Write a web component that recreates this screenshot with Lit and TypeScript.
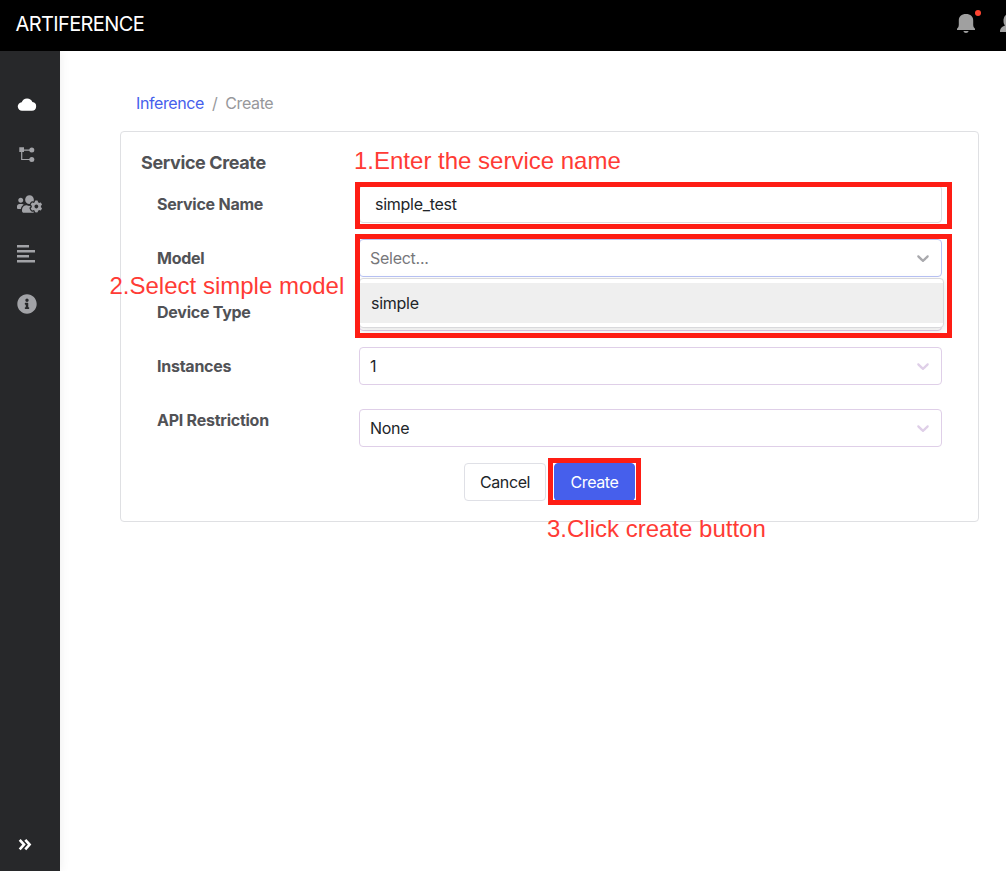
import { LitElement, html, css, svg } from "lit";
import { customElement } from "lit/decorators.js";

const chevron = html`<svg class="chev" viewBox="0 0 20 20"><path d="M4.516 7.548c0.436-0.446 1.043-0.481 1.576 0l3.908 3.747 3.908-3.747c0.533-0.481 1.141-0.446 1.574 0 0.436 0.445 0.408 1.197 0 1.615-0.406 0.418-4.695 4.502-4.695 4.502-0.217 0.223-0.502 0.335-0.787 0.335s-0.57-0.112-0.789-0.335c0 0-4.287-4.084-4.695-4.502s-0.436-1.17 0-1.615z"/></svg>`;

const cloud = svg`<path d="M5.300 16.700A4.250 4.250 0 0 1 4.700 8.200A5.700 5.700 0 0 1 15.400 8.100A4.320 4.320 0 0 1 14.700 16.700Z"/>`;
const flow = svg`<path d="M2.300 3.300h4.700v2.200h7v1.200h-7V8H5.300v6.900h9.500v1.200H4.100V8H2.300z"/><circle cx="14.800" cy="6.100" r="2.500"/><circle cx="14.800" cy="15.500" r="2.500"/>`;
const team = svg`<path d="M610.5 341.3c2.6-14.1 2.6-28.5 0-42.6l25.8-14.9c3-1.7 4.3-5.2 3.3-8.5-6.7-21.6-18.2-41.2-33.2-57.4-2.3-2.5-6-3.1-9-1.4l-25.8 14.9c-10.9-9.3-23.4-16.5-36.9-21.3v-29.8c0-3.4-2.4-6.4-5.7-7.1-22.3-5-45-4.8-66.2 0-3.3.7-5.7 3.7-5.7 7.1v29.8c-13.5 4.8-26 12-36.9 21.3l-25.8-14.9c-2.9-1.7-6.7-1.1-9 1.4-15 16.2-26.5 35.8-33.2 57.4-1 3.3.4 6.8 3.3 8.5l25.8 14.9c-2.6 14.1-2.6 28.5 0 42.6l-25.8 14.9c-3 1.7-4.3 5.2-3.3 8.5 6.7 21.6 18.2 41.1 33.2 57.4 2.3 2.5 6 3.1 9 1.4l25.8-14.9c10.9 9.3 23.4 16.5 36.9 21.3v29.8c0 3.4 2.4 6.4 5.7 7.1 22.3 5 45 4.8 66.2 0 3.3-.7 5.7-3.7 5.7-7.1v-29.8c13.5-4.8 26-12 36.9-21.3l25.8 14.9c2.9 1.7 6.7 1.1 9-1.4 15-16.2 26.5-35.8 33.2-57.4 1-3.3-.4-6.8-3.3-8.5l-25.8-14.9zM496 368.5c-26.8 0-48.5-21.8-48.5-48.5s21.8-48.5 48.5-48.5 48.5 21.8 48.5 48.5-21.7 48.5-48.5 48.5zM96 224c35.3 0 64-28.7 64-64s-28.7-64-64-64-64 28.7-64 64 28.7 64 64 64zm224 32c1.9 0 3.7-.5 5.6-.6 8.3-21.7 20.5-42.1 36.3-59.2 7.4-8 17.9-12.6 28.9-12.6 6.9 0 13.7 1.8 19.6 5.3l7.9 4.6c.8-.5 1.6-.9 2.4-1.4 7-14.6 11.2-30.8 11.2-48 0-61.9-50.1-112-112-112S208 82.1 208 144c0 61.9 50.1 112 112 112zm105.2 194.5c-2.3-1.2-4.6-2.6-6.8-3.9-8.2 4.8-15.3 9.8-27.5 9.8-10.9 0-21.4-4.6-28.9-12.6-18.3-19.8-32.3-43.9-40.2-69.6-10.7-34.5 24.9-49.7 25.8-50.3-.1-2.6-.1-5.2 0-7.8l-7.9-4.6c-3.8-2.2-7-5-9.8-8.1-3.3.2-6.5.6-9.8.6-24.6 0-47.6-6-68.5-16h-8.3C179.6 288 128 339.6 128 403.2V432c0 26.5 21.5 48 48 48h255.4c-3.7-6-6.2-12.8-6.2-20.3v-9.2zM173.1 274.6C161.5 263.1 145.6 256 128 256H64c-35.3 0-64 28.7-64 64v32c0 17.7 14.3 32 32 32h65.9c6.3-47.4 34.9-87.3 75.2-109.4z"/>`;
const lines = svg`<path d="M0 1h12v2.5H0zM0 6h18v2.5H0zM0 11h12v2.5H0zM0 16h18v2.5H0z"/>`;
const info = svg`<path d="M256 8C119.043 8 8 119.083 8 256c0 136.997 111.043 248 248 248s248-111.003 248-248C504 119.083 392.957 8 256 8zm0 110c23.196 0 42 18.804 42 42s-18.804 42-42 42-42-18.804-42-42 18.804-42 42-42zm56 254c0 6.627-5.373 12-12 12h-88c-6.627 0-12-5.373-12-12v-24c0-6.627 5.373-12 12-12h12v-64h-12c-6.627 0-12-5.373-12-12v-24c0-6.627 5.373-12 12-12h64c6.627 0 12 5.373 12 12v100h12c6.627 0 12 5.373 12 12v24z"/>`;

@customElement("app-root")
export class AppRoot extends LitElement {
  static styles = css`
    :host { display: flex; flex-direction: column; height: 871px; width: 1006px; overflow: hidden; background: #fff;
      font: 16px/24px Inter, sans-serif; color: #212529; }
    * { box-sizing: border-box; }
    svg { display: block; }
    header { height: 51px; flex: none; background: #000; color: #fff; display: flex; align-items: center;
      justify-content: space-between; padding: 0 0 4px 15.5px; overflow: hidden; }
    .brand { font-size: 20px; letter-spacing: -.62px; }
    .tools { width: 50px; height: 47px; flex: none; }
    .body { flex: 1; display: flex; min-height: 0; }
    nav { width: 60px; background: #27282a; display: flex; flex-direction: column; padding: 28px 0 14px 17px;
      box-shadow: 0 0 10px rgba(0,0,0,.08); clip-path: inset(0 -12px 0 0); }
    .item { height: 50px; display: flex; align-items: center; fill: #a2a3a7; }
    .active { fill: #fff; }
    .toggle { margin-top: auto; height: 24px; display: flex; align-items: center; }
    main { width: 919px; padding: 40px 0 0 60px; }
    .crumbs { display: flex; gap: 8px; padding-left: 16px; height: 24px; margin-bottom: 16px; color: #97989b; letter-spacing: -.4px; }
    .link { color: #465fec; }
    .card { position: relative; width: 859px; height: 391px; border: 1px solid #dfe0e3; border-radius: 4px; padding: 19px 20px; }
    .title { font-size: 18px; font-weight: 700; color: #515256; line-height: 24px; height: 34px; letter-spacing: -.38px; }
    .form { display: flex; flex-direction: column; gap: 16px; padding: 0 16px; }
    .row { display: grid; grid-template-columns: 202px 583px; align-items: start; }
    .label { font-weight: 700; line-height: 38px; color: #515256; letter-spacing: -.25px; }
    .field { position: relative; height: 38px; border: 1px solid #dfcfe8; border-radius: 4px; display: flex; align-items: center;
      justify-content: space-between; padding: 0 8px 0 10px; letter-spacing: -.27px; fill: #dfcfe8; }
    .plain { border-color: #dcdde0; padding-left: 15px; }
    .focus { border-color: #b9c3f5; color: #77777a; fill: #a9a9ad; z-index: 2; }
    .low { margin-top: 8px; }
    .chev { width: 20px; height: 20px; }
    .menu { position: absolute; left: -1px; top: 38px; width: 585px; height: 50px; border: 1px solid #d9d9dc; border-radius: 4px;
      background: #fff; padding: 4px 0; box-shadow: 0 3px 8px rgba(0,0,0,.1); color: #212529; }
    .option { height: 40px; line-height: 40px; background: #efefef; padding-left: 11px; }
    .buttons { display: flex; gap: 8px; padding-left: 307px; }
    .btn { height: 38px; width: 82px; border: 1px solid #dfe0e6; border-radius: 4px; line-height: 36px; text-align: center; letter-spacing: -.38px; }
    .primary { background: #465fec; color: #fff; border-color: #465fec; width: 81px; }
    .box { position: absolute; border: 5px solid #fe1d14; z-index: 3; }
    .b1 { left: 234px; top: 50px; width: 597px; height: 47px; }
    .b2 { left: 234px; top: 102px; width: 597px; height: 104px; }
    .b3 { left: 427px; top: 326px; width: 93px; height: 47px; }
    .note { position: absolute; font: 24px/28px "Liberation Sans", sans-serif; color: #ff3b35; white-space: nowrap; z-index: 4; }
    .n1 { left: 233px; top: 15px; }
    .n2 { left: -11.500px; top: 140px; }
    .n3 { left: 426px; top: 383px; }
  `;

  render() {
    return html`
      <header>
        <div class="brand">ARTIFERENCE</div>
        <svg class="tools" viewBox="956 0 50 47">
          <path fill="#a0a0a0" d="M957 30v-1.2q1.8-1 1.8-3.8V20.5c0-4 2.7-6.5 7.2-6.5s7.2 2.500 7.200 6.500V25q0 2.800 1.800 3.800V30zM963.300 31h5.400q-.7 2-2.700 2t-2.700-2z"/>
          <circle cx="978" cy="13" r="3" fill="#ff4430"/>
          <path fill="#a0a0a0" d="M1000 32c0-4 2-5.500 5-6.500c-1.500-1.500-1.500-3-1.500-6q.5-4 4-5.500V32z"/>
        </svg>
      </header>
      <div class="body">
        <nav>
          <div class="item active"><svg width="20" height="20">${cloud}</svg></div>
          <div class="item"><svg width="20" height="20">${flow}</svg></div>
          <div class="item"><svg width="25" height="20" viewBox="0 0 640 512">${team}</svg></div>
          <div class="item"><svg width="20" height="20">${lines}</svg></div>
          <div class="item"><svg width="20" height="20" viewBox="0 0 512 512">${info}</svg></div>
          <div class="toggle"><svg width="20" height="20" fill="none" stroke="#fff" stroke-width="2.600"><path d="M2.700 4.800l4.300 4.800l-4.300 4.800M8.300 4.800l4.300 4.800l-4.300 4.800"/></svg></div>
        </nav>
        <main>
          <div class="crumbs"><span class="link">Inference</span><span>/</span><span>Create</span></div>
          <section class="card">
            <div class="title">Service Create</div>
            <div class="form">
              <div class="row"><div class="label">Service Name</div><div class="field plain">simple_test</div></div>
              <div class="row"><div class="label">Model</div>
                <div class="field focus"><span>Select...</span>${chevron}<div class="menu"><div class="option">simple</div></div></div></div>
              <div class="row"><div class="label">Device Type</div><div class="field"></div></div>
              <div class="row"><div class="label">Instances</div><div class="field"><span>1</span>${chevron}</div></div>
              <div class="row"><div class="label">API Restriction</div><div class="field low"><span>None</span>${chevron}</div></div>
              <div class="buttons"><div class="btn">Cancel</div><div class="btn primary">Create</div></div>
            </div>
            <div class="box b1"></div><div class="box b2"></div><div class="box b3"></div>
            <div class="note n1">1.Enter the service name</div>
            <div class="note n2">2.Select simple model</div>
            <div class="note n3">3.Click create button</div>
          </section>
        </main>
      </div>`;
  }
}
